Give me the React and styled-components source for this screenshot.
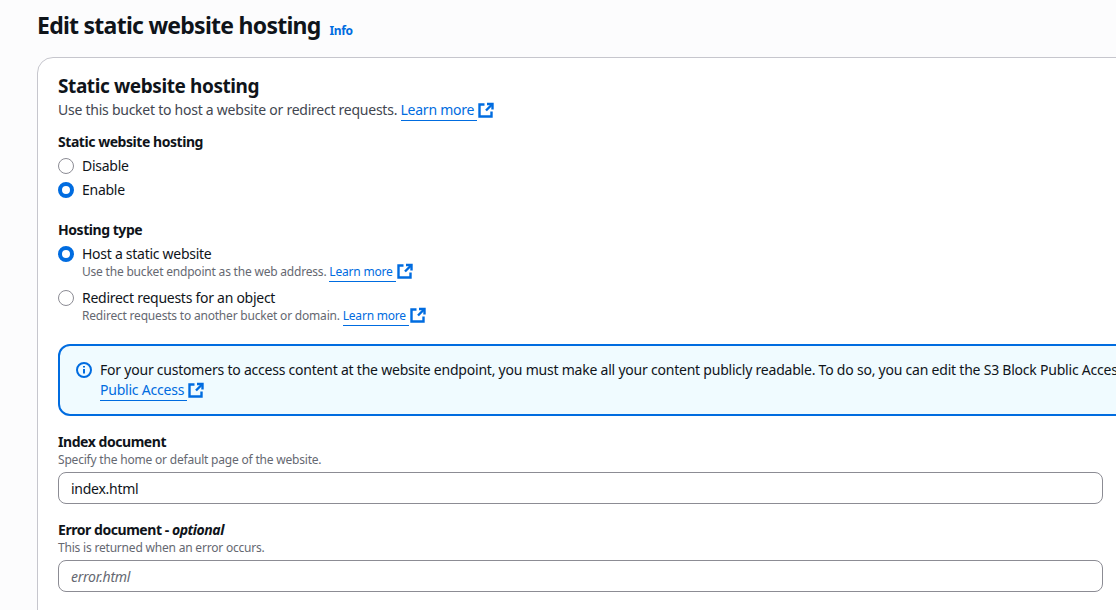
import styled, { createGlobalStyle } from 'styled-components';

const GlobalStyle = createGlobalStyle`
    html, body {
        margin: 0;
        padding: 0;
        background: #fcfcfd;
        overflow: hidden;
    }
    body {
        font-family: "Noto Sans", "Open Sans", Arial, sans-serif;
        color: #0f141a;
    }
`

const Page = styled.div`
    width: 1116px;
    height: 610px;
    overflow: hidden;
    padding: 9px 0 0 37px;
    box-sizing: border-box;
`

const Header = styled.header`
    display: flex;
    align-items: flex-start;
    gap: 9px;
    height: 48px;
`

const Title = styled.h1`
    margin: 0;
    font-size: 23px;
    line-height: 32px;
    font-weight: 700;
    letter-spacing: -0.74px;
`

const InfoLink = styled.a`
    margin-top: 13px;
    font-size: 12px;
    line-height: 18px;
    font-weight: 700;
    letter-spacing: -0.4px;
    color: #006ce0;
`

const Card = styled.section`
    width: 1260px;
    min-height: 620px;
    box-sizing: border-box;
    padding: 15px 20px 0 20px;
    background: #ffffff;
    border: 1px solid #c6c6cd;
    border-radius: 16px;
`

const CardTitle = styled.h2`
    margin: 0;
    font-size: 19px;
    line-height: 26px;
    font-weight: 700;
    letter-spacing: -0.41px;
`

const CardDesc = styled.p`
    margin: 1px 0 0;
    font-size: 14px;
    line-height: 20px;
    letter-spacing: -0.25px;
    color: #424650;
`

const Link = styled.a`
    color: #006ce0;
    text-decoration: none;
    border-bottom: 1px solid #006ce0;
    padding-bottom: 1px;
    padding-right: 3px;
`

const ExternalMark = styled.svg`
    width: 16px;
    height: 16px;
    margin: -4px 0 -4px 1px;
    vertical-align: 1px;
    display: inline-block;
`

const Field = styled.div`
    margin-top: ${p => p.$top}px;
`

const Label = styled.div`
    font-size: 14px;
    line-height: 20px;
    font-weight: 700;
    letter-spacing: -0.45px;
`

const Hint = styled.div`
    font-size: 12px;
    line-height: 16px;
    letter-spacing: -0.2px;
    color: #656871;
`

const RadioList = styled.div`
    display: flex;
    flex-direction: column;
    gap: ${p => p.$gap}px;
    margin-top: 4px;
`

const RadioRow = styled.div`
    display: flex;
    align-items: flex-start;
    gap: 8px;
`

const RadioDot = styled.span`
    width: 16px;
    height: 16px;
    margin-top: 2px;
    flex: none;
    box-sizing: border-box;
    border-radius: 50%;
    background: #ffffff;
    border: ${p => (p.$checked ? '4.5px solid #006ce0' : '1px solid #8c8c94')};
`

const RadioText = styled.div`
    font-size: 14px;
    line-height: 20px;
    letter-spacing: -0.27px;
`

const Alert = styled.div`
    display: flex;
    gap: 8px;
    margin-top: 20px;
    padding: 14px 0 0 16px;
    height: 72px;
    box-sizing: border-box;
    background: #f0fbff;
    border: 2px solid #006ce0;
    border-radius: 12px;
    font-size: 14px;
    line-height: 20px;
    letter-spacing: -0.22px;
    white-space: nowrap;
`

const AlertIcon = styled.svg`
    width: 16px;
    height: 16px;
    flex: none;
    margin-top: 2px;
`

const TextInput = styled.input`
    display: block;
    width: 1045px;
    height: 32px;
    margin-top: 4px;
    padding: 0 12px;
    box-sizing: border-box;
    background: #ffffff;
    border: 1px solid #8c8c94;
    border-radius: 8px;
    font-family: inherit;
    font-size: 14px;
    letter-spacing: -0.27px;
    color: #0f141a;
    &::placeholder {
        color: #656871;
        font-style: italic;
        opacity: 1;
    }
`

function External() {
    return (
        <ExternalMark viewBox="0 0 16 16" fill="none" stroke="#006ce0" strokeWidth="2.4">
            <path d="M6.5 2.5H1.5v12h12V9.5" />
            <path d="M9 2h5.5v5.5" />
            <path d="M14 2.5L8 8.5" />
        </ExternalMark>
    )
}

function LearnMore({ children = 'Learn more' }) {
    return (
        <>
            <Link>{children}</Link>
            <External />
        </>
    )
}

export default function App() {
    return (
        <Page>
            <GlobalStyle />
            <Header>
                <Title>Edit static website hosting</Title>
                <InfoLink>Info</InfoLink>
            </Header>
            <Card>
                <CardTitle>Static website hosting</CardTitle>
                <CardDesc>
                    Use this bucket to host a website or redirect requests. <LearnMore />
                </CardDesc>

                <Field $top={12}>
                    <Label>Static website hosting</Label>
                    <RadioList $gap={4}>
                        <RadioRow>
                            <RadioDot />
                            <RadioText>Disable</RadioText>
                        </RadioRow>
                        <RadioRow>
                            <RadioDot $checked />
                            <RadioText>Enable</RadioText>
                        </RadioRow>
                    </RadioList>
                </Field>

                <Field $top={20}>
                    <Label>Hosting type</Label>
                    <RadioList $gap={8}>
                        <RadioRow>
                            <RadioDot $checked />
                            <div>
                                <RadioText>Host a static website</RadioText>
                                <Hint>Use the bucket endpoint as the web address. <LearnMore /></Hint>
                            </div>
                        </RadioRow>
                        <RadioRow>
                            <RadioDot />
                            <div>
                                <RadioText>Redirect requests for an object</RadioText>
                                <Hint>Redirect requests to another bucket or domain. <LearnMore /></Hint>
                            </div>
                        </RadioRow>
                    </RadioList>
                </Field>

                <Alert>
                    <AlertIcon viewBox="0 0 16 16" fill="none" stroke="#006ce0" strokeWidth="2">
                        <circle cx="8" cy="8" r="7" />
                        <path d="M8 7v4.5" />
                        <path d="M8 4v1.6" />
                    </AlertIcon>
                    <div>
                        For your customers to access content at the website endpoint, you must make all your content publicly readable. To do so, you can edit the S3 Block Public Access settings for the bucket.
                        <br />
                        <LearnMore>Public Access</LearnMore>
                    </div>
                </Alert>

                <Field $top={16}>
                    <Label>Index document</Label>
                    <Hint>Specify the home or default page of the website.</Hint>
                    <TextInput defaultValue="index.html" />
                </Field>

                <Field $top={16}>
                    <Label>Error document - <em>optional</em></Label>
                    <Hint>This is returned when an error occurs.</Hint>
                    <TextInput placeholder="error.html" />
                </Field>
            </Card>
        </Page>
    )
}
